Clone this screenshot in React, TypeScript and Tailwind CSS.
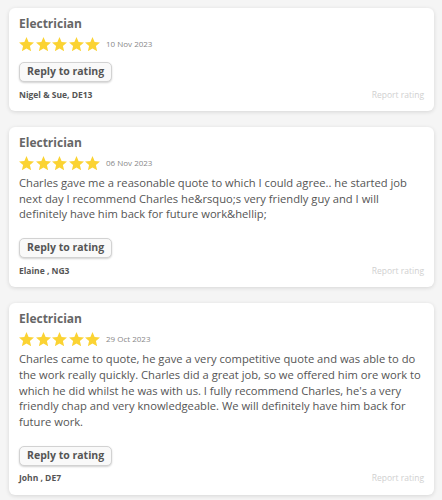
import React from "react";

interface Review {
  trade: string;
  date: string;
  body?: string;
  author: string;
}

const REVIEWS: Review[] = [
  { trade: "Electrician", date: "10 Nov 2023", author: "Nigel & Sue, DE13" },
  {
    trade: "Electrician",
    date: "06 Nov 2023",
    body: "Charles gave me a reasonable quote to which I could agree.. he started job next day I recommend Charles he&rsquo;s very friendly guy and I will definitely have him back for future work&hellip;",
    author: "Elaine , NG3",
  },
  {
    trade: "Electrician",
    date: "29 Oct 2023",
    body: "Charles came to quote, he gave a very competitive quote and was able to do the work really quickly. Charles did a great job, so we offered him ore work to which he did whilst he was with us. I fully recommend Charles, he's a very friendly chap and very knowledgeable. We will definitely have him back for future work.",
    author: "John , DE7",
  },
];

function Star() {
  return (
    <svg viewBox="2 2 20 19" width="15" height="14.25" className="shrink-0">
      <path
        fill="#fbd333"
        d="M12 17.27L18.18 21l-1.64-7.03L22 9.24l-7.19-.61L12 2 9.19 8.63 2 9.24l5.46 4.73L5.82 21z"
      />
    </svg>
  );
}

function ReviewCard({ review }: { review: Review }) {
  return (
    <div className="rounded-md bg-white px-[10px] pt-2 pb-[10px] shadow-[0_1px_4px_rgba(0,0,0,0.13)]">
      <h3 className="text-[12px] font-bold leading-4 text-[#666]">{review.trade}</h3>

      <div className="mt-1 flex h-4 items-center">
        <div className="flex items-center gap-[1.5px]">
          {[0, 1, 2, 3, 4].map((i) => (
            <Star key={i} />
          ))}
        </div>
        <span className="ml-[6px] text-[8px] text-[#888]">{review.date}</span>
      </div>

      {/* margin collapses with the button's top margin, so this sets the full gap */}
      {review.body && (
        <p className="mt-1 mb-4 text-[11.2px] leading-[15.7px] text-[#555]">{review.body}</p>
      )}

      <button className="mt-[10px] flex h-5 items-center rounded-[5px] border border-[#d2d2d2] bg-[#f9f9f9] px-[7px] text-[10.5px] font-bold text-[#555] shadow-[0_1px_2px_rgba(0,0,0,0.18)]">
        Reply to rating
      </button>

      <div className="mt-[7px] flex h-3 items-center justify-between">
        <span className="text-[8.5px] font-bold text-[#555]">{review.author}</span>
        <span className="text-[8.5px] text-[#d0d0d0]">Report rating</span>
      </div>
    </div>
  );
}

export default function App() {
  return (
    <div
      className="min-h-[500px] bg-[#f5f5f5] pt-2 pr-2 pl-[9px]"
      style={{ fontFamily: '"Open Sans", sans-serif' }}
    >
      <div className="flex flex-col gap-4">
        {REVIEWS.map((r, i) => (
          <ReviewCard key={i} review={r} />
        ))}
      </div>
    </div>
  );
}
